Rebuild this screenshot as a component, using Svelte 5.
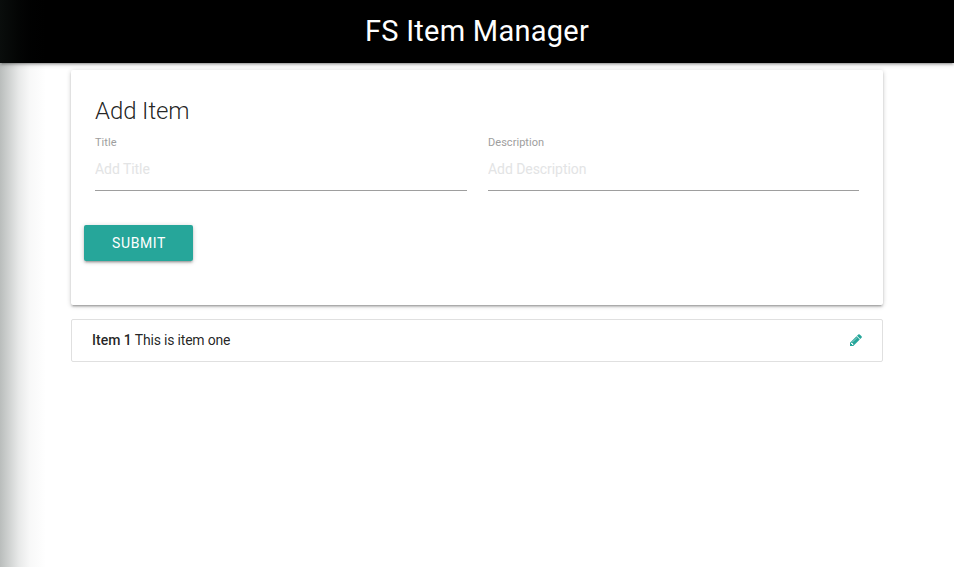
<script>
  let title = $state('');
  let description = $state('');
  const items = [{ title: 'Item 1', description: 'This is item one' }];
</script>

<div class="page">
  <nav><span class="brand">FS Item Manager</span></nav>
  <main>
    <section class="card">
      <h1>Add Item</h1>
      <form onsubmit={(e) => e.preventDefault()}>
        <div class="fields">
          <label>Title<input placeholder="Add Title" bind:value={title} /></label>
          <label>Description<input placeholder="Add Description" bind:value={description} /></label>
        </div>
        <button>SUBMIT</button>
      </form>
    </section>
    <ul>
      {#each items as item}
        <li>
          <span class="text"><strong>{item.title}</strong> {item.description}</span>
          <svg viewBox="0 0 1536 1792" width="12" height="14" aria-label="Edit"><path transform="translate(0 1536) scale(1 -1)" d="M363 0l91 91l-235 235l-91 -91v-107h128v-128h107zM886 928q0 22 -22 22q-10 0 -17 -7l-542 -542q-7 -7 -7 -17q0 -22 22 -22q10 0 17 7l542 542q7 7 7 17zM832 1120l416 -416l-832 -832h-416v416zM1515 1024q0 -53 -37 -90l-166 -166l-416 416l166 165q36 38 90 38 q53 0 91 -38l235 -234q37 -39 37 -91z" /></svg>
        </li>
      {/each}
    </ul>
  </main>
  <div class="edge"></div>
</div>

<style>
  :global(body) { margin: 0; background: #fff; }
  .page { position: relative; height: 567px; overflow: hidden; font-family: Roboto, sans-serif; font-size: 14px; line-height: 1.5; color: rgba(0,0,0,.87); }
  nav { height: 63px; background: #000; color: #fff; text-align: center; line-height: 62px; box-shadow: 0 2px 2px 0 rgba(0,0,0,.14), 0 3px 1px -2px rgba(0,0,0,.12), 0 1px 5px 0 rgba(0,0,0,.2); }
  .brand { font-size: 29px; letter-spacing: .25px; }
  main { width: 812px; margin: 7px auto 0; }
  .card { box-sizing: border-box; height: 235px; padding: 25px 24px 24px; border-radius: 2px; background: #fff; box-shadow: 0 2px 2px 0 rgba(0,0,0,.14), 0 3px 1px -2px rgba(0,0,0,.12), 0 1px 5px 0 rgba(0,0,0,.2); }
  h1 { margin: 0; font-size: 24px; font-weight: 300; line-height: 32px; letter-spacing: -.1px; }
  .fields { display: grid; grid-template-columns: 372px 371px; gap: 21px; padding-top: 9px; }
  label { font-size: 11px; line-height: 14px; color: #9e9e9e; letter-spacing: .04px; }
  input { display: block; box-sizing: border-box; width: 100%; height: 41px; margin: 0; padding: 0 0 2px; border: 0; border-bottom: 1px solid #9e9e9e; outline: 0; background: transparent; font: 14px Roboto, sans-serif; letter-spacing: -.06px; }
  input::placeholder { color: #e3e4e5; opacity: 1; }
  button { display: block; width: 109px; height: 36px; margin: 34px 0 0 -11px; padding: 1px 0 0 1px; border: 0; border-radius: 2px; background: #26a69a; color: #fff; font: 14px/35px Roboto, sans-serif; letter-spacing: .6px; box-shadow: 0 2px 2px 0 rgba(0,0,0,.14), 0 3px 1px -2px rgba(0,0,0,.12), 0 1px 5px 0 rgba(0,0,0,.2); }
  ul { list-style: none; margin: 14px 0 0; padding: 0; border: 1px solid #e0e0e0; border-radius: 2px; }
  li { display: flex; align-items: center; justify-content: space-between; height: 41px; padding: 0 20px; }
  .text { letter-spacing: -.19px; }
  strong { font-weight: 500; letter-spacing: 0; }
  svg { fill: #26a69a; margin-bottom: 2px; }
  .edge { position: absolute; left: 0; top: 0; width: 46px; height: 100%; pointer-events: none; background: linear-gradient(90deg, rgba(30,42,38,.31), rgba(30,42,38,.21) 9px, rgba(30,42,38,.1) 19px, rgba(30,42,38,.03) 30px, rgba(30,42,38,0)); }
</style>
